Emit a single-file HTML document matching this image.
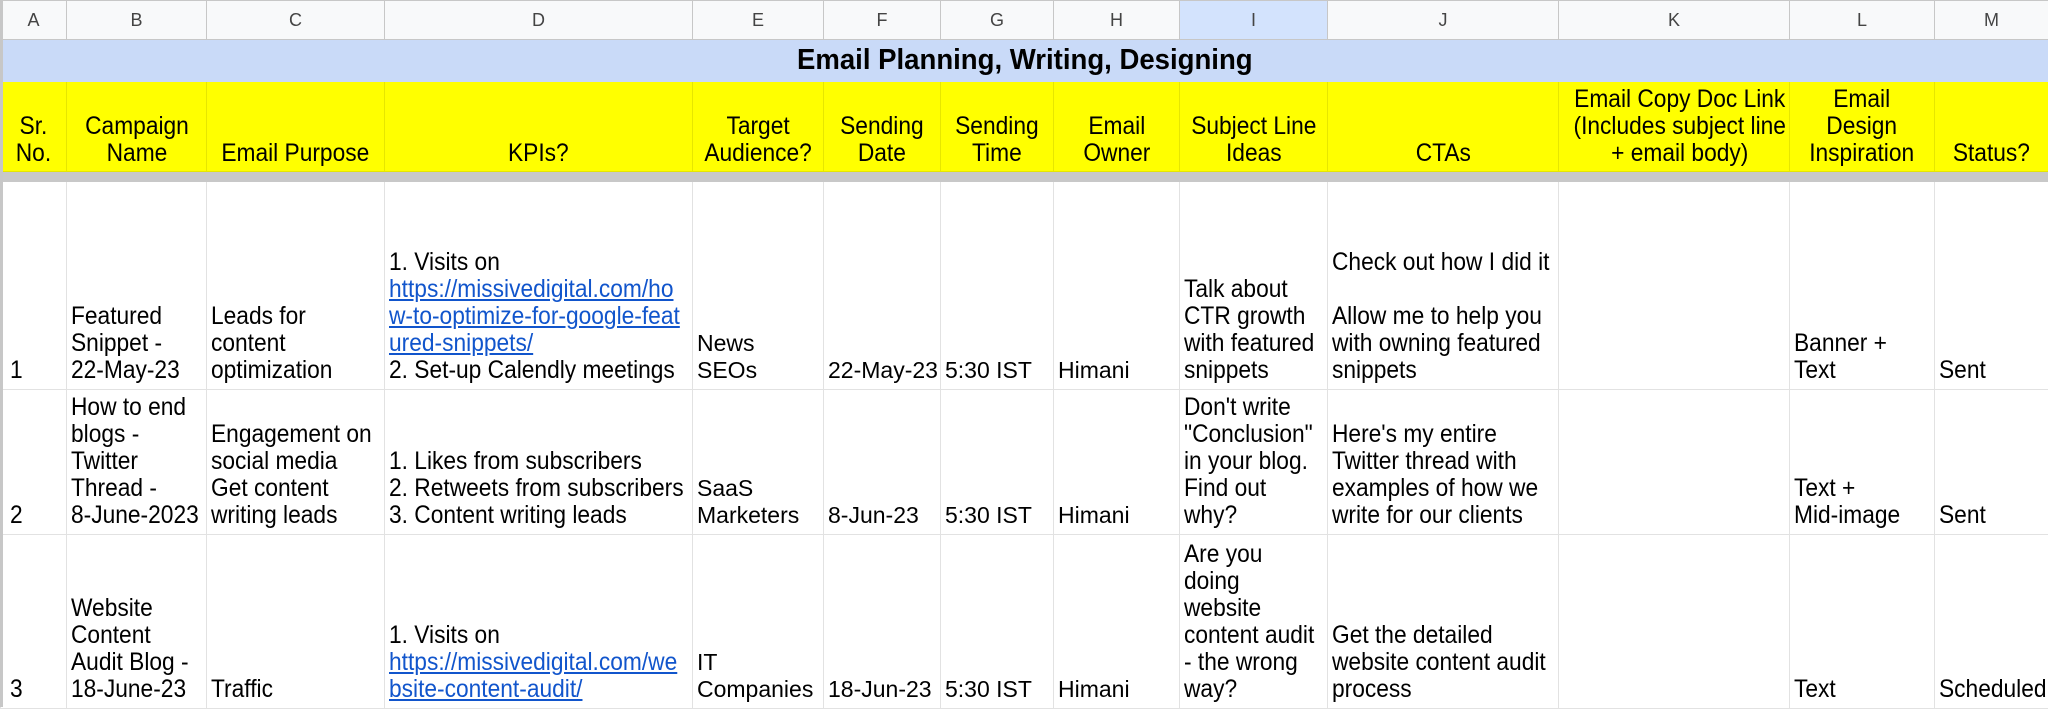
<!DOCTYPE html>
<html><head><meta charset="utf-8">
<style>
html,body{margin:0;padding:0;background:#fff;}
body{width:2048px;height:707px;overflow:hidden;font-family:"Liberation Sans",Arial,sans-serif;}
table{border-collapse:collapse;table-layout:fixed;width:2048px;}
td{border:1px solid #e2e2e2;padding:0 4px 5px 4px;vertical-align:bottom;font-size:25px;line-height:27px;color:#000;white-space:nowrap;overflow:hidden;}
td .n{display:inline-block;transform:scaleX(.91);transform-origin:left bottom;}
td.w{font-size:23px;}
tr.ch td{background:#f8f9fa;border-color:#c7c7c7;text-align:center;vertical-align:middle;color:#444;font-size:18px;padding:0;}
tr.ch td.sel{background:#d3e3fd;}
tr.ti td{background:#c9daf8;border-color:#c9daf8;text-align:center;vertical-align:middle;font-weight:bold;font-size:29px;padding:0;}
tr.ti td .n{transform:scaleX(.95);transform-origin:center;}
tr.hd td{background:#ffff00;border-color:#e6e600;text-align:center;padding-bottom:4px;}
tr.hd td .n{transform-origin:center bottom;}
tr.gr td{background:#c8c8c8;border-color:#c8c8c8;padding:0;height:9px;line-height:0;font-size:0;}
td.a{padding-left:9px;}
a{color:#1155cc;text-decoration:underline;}
</style></head><body>
<div style="position:absolute;left:0;top:0;width:3px;height:707px;background:#c7c7c7;z-index:2"></div>
<table>
<colgroup>
<col style="width:66px"><col style="width:140px"><col style="width:178px"><col style="width:308px"><col style="width:131px"><col style="width:117px"><col style="width:113px"><col style="width:126px"><col style="width:148px"><col style="width:231px"><col style="width:231px"><col style="width:145px"><col style="width:114px">
</colgroup>
<tr class="ch" style="height:39px"><td>A</td><td>B</td><td>C</td><td>D</td><td>E</td><td>F</td><td>G</td><td>H</td><td class="sel">I</td><td>J</td><td>K</td><td>L</td><td>M</td></tr>
<tr class="ti" style="height:42px"><td colspan="13"><div class="n">Email Planning, Writing, Designing</div></td></tr>
<tr class="hd" style="height:90px">
<td><div class="n">Sr.<br>No.</div></td><td><div class="n">Campaign<br>Name</div></td><td><div class="n">Email Purpose</div></td><td><div class="n">KPIs?</div></td><td><div class="n">Target<br>Audience?</div></td><td><div class="n">Sending<br>Date</div></td><td><div class="n">Sending<br>Time</div></td><td><div class="n">Email<br>Owner</div></td><td><div class="n">Subject Line<br>Ideas</div></td><td><div class="n">CTAs</div></td><td><div class="n">Email Copy Doc Link<br>(Includes subject line<br>+ email body)</div></td><td><div class="n">Email<br>Design<br>Inspiration</div></td><td><div class="n">Status?</div></td></tr>
<tr class="gr"><td></td><td></td><td></td><td></td><td></td><td></td><td></td><td></td><td></td><td></td><td></td><td></td><td></td></tr>
<tr style="height:208px">
<td class="a"><div class="n">1</div></td><td><div class="n">Featured<br>Snippet -<br>22-May-23</div></td><td><div class="n">Leads for<br>content<br>optimization</div></td>
<td><div class="n">1. Visits on<br><a>https://missivedigital.com/ho<br>w-to-optimize-for-google-feat<br>ured-snippets/</a><br>2. Set-up Calendly meetings</div></td>
<td class="w">News<br>SEOs</td><td class="w">22-May-23</td><td class="w">5:30 IST</td><td class="w">Himani</td>
<td><div class="n">Talk about<br>CTR growth<br>with featured<br>snippets</div></td>
<td><div class="n">Check out how I did it<br><br>Allow me to help you<br>with owning featured<br>snippets</div></td>
<td></td><td><div class="n">Banner +<br>Text</div></td><td><div class="n">Sent</div></td></tr>
<tr style="height:145px">
<td class="a"><div class="n">2</div></td><td><div class="n">How to end<br>blogs -<br>Twitter<br>Thread -<br>8-June-2023</div></td><td><div class="n">Engagement on<br>social media<br>Get content<br>writing leads</div></td>
<td><div class="n">1. Likes from subscribers<br>2. Retweets from subscribers<br>3. Content writing leads</div></td>
<td class="w">SaaS<br>Marketers</td><td class="w">8-Jun-23</td><td class="w">5:30 IST</td><td class="w">Himani</td>
<td><div class="n">Don't write<br>"Conclusion"<br>in your blog.<br>Find out<br>why?</div></td>
<td><div class="n">Here's my entire<br>Twitter thread with<br>examples of how we<br>write for our clients</div></td>
<td></td><td><div class="n">Text +<br>Mid-image</div></td><td><div class="n">Sent</div></td></tr>
<tr style="height:174px">
<td class="a"><div class="n">3</div></td><td><div class="n">Website<br>Content<br>Audit Blog -<br>18-June-23</div></td><td><div class="n">Traffic</div></td>
<td><div class="n">1. Visits on<br><a>https://missivedigital.com/we<br>bsite-content-audit/</a></div></td>
<td class="w">IT<br>Companies</td><td class="w">18-Jun-23</td><td class="w">5:30 IST</td><td class="w">Himani</td>
<td><div class="n">Are you<br>doing<br>website<br>content audit<br>- the wrong<br>way?</div></td>
<td><div class="n">Get the detailed<br>website content audit<br>process</div></td>
<td></td><td><div class="n">Text</div></td><td><div class="n">Scheduled</div></td></tr>
</table>
</body></html>
